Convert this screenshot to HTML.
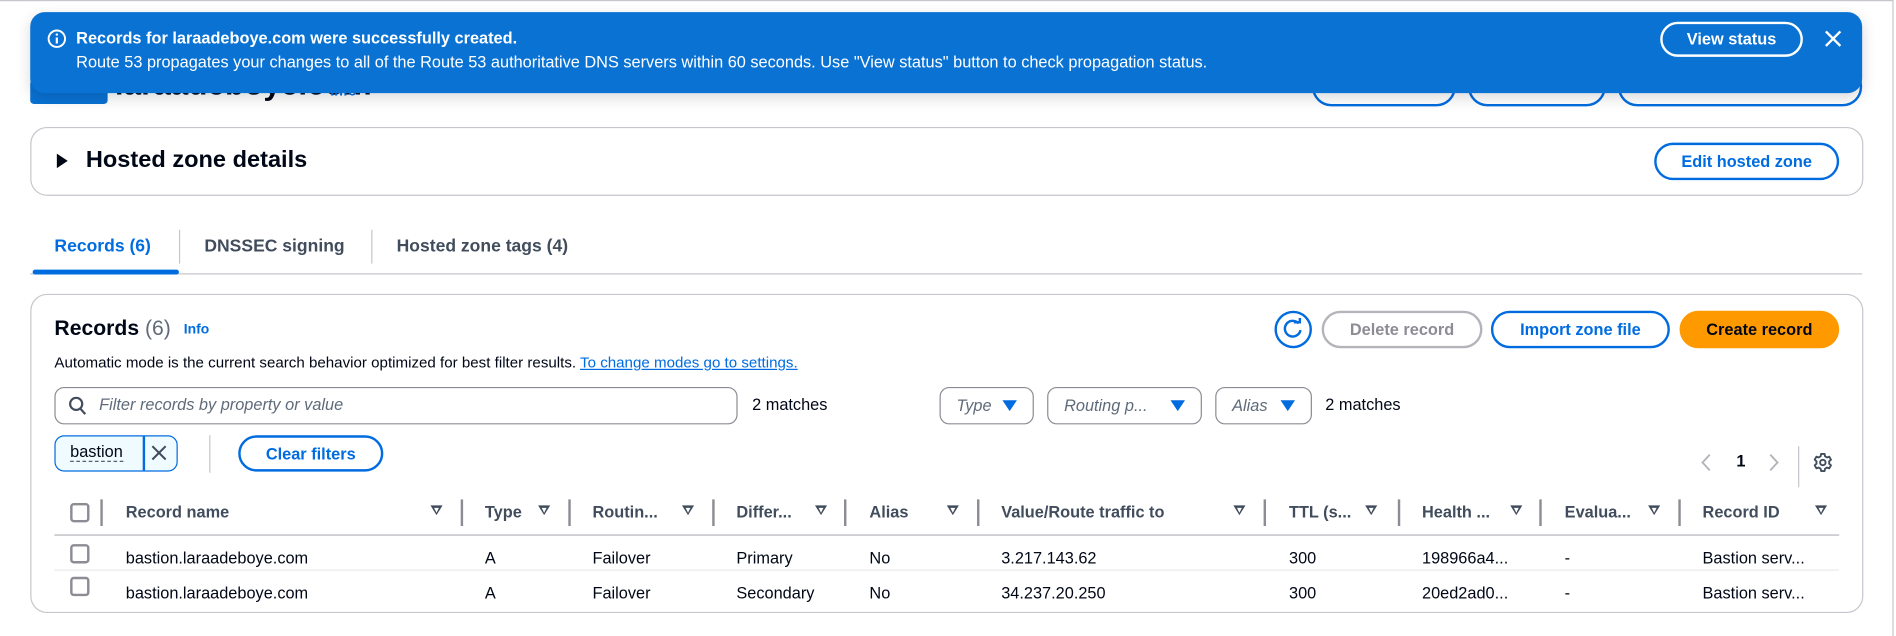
<!DOCTYPE html>
<html><head><meta charset="utf-8">
<style>
html,body{margin:0;padding:0;width:1896px;height:635px;overflow:hidden;background:#fff;}
#w{position:absolute;left:0;top:0;width:1568px;height:526px;transform:scale(1.20918);transform-origin:0 0;font-family:"Liberation Sans",sans-serif;color:#000716;font-size:13.5px;}
.a{position:absolute;white-space:nowrap;}
.box{position:absolute;border:1px solid #c6c6cd;border-radius:14px;background:#fff;}
.btn{position:absolute;box-sizing:border-box;border:2px solid #006ce0;border-radius:16px;color:#006ce0;font-weight:bold;font-size:13.5px;display:flex;align-items:center;justify-content:center;background:#fff;}
.sel{position:absolute;box-sizing:border-box;border:1.5px solid #8c8c94;border-radius:8px;top:320px;height:31px;font-style:italic;color:#5f6b7a;font-size:13.5px;display:flex;align-items:center;padding-left:13px;}
.tri{position:absolute;right:13px;top:10px;width:0;height:0;border-left:6px solid transparent;border-right:6px solid transparent;border-top:9px solid #006ce0;}
.hd{position:absolute;top:416px;font-weight:bold;color:#414d5c;font-size:13.5px;white-space:nowrap;}
.srt{position:absolute;top:418px;width:0;height:0;border-left:5px solid transparent;border-right:5px solid transparent;border-top:8px solid #414d5c;}
.srt:after{content:"";position:absolute;left:-2.5px;top:-6.5px;border-left:2.5px solid transparent;border-right:2.5px solid transparent;border-top:4px solid #fff;}
.sep{position:absolute;top:413px;width:1.5px;height:22px;background:#8c8c94;}
.cb{position:absolute;left:58px;width:12px;height:12px;border:2px solid #8c8c94;border-radius:3px;}
.td{position:absolute;white-space:nowrap;font-size:13.5px;}
</style></head><body><div id="w">
<div class="a" style="left:0;top:0;width:1566px;height:1px;background:#c6c6cd"></div>
<div class="a" style="left:1565px;top:0;width:1px;height:526px;background:#c6c6cd"></div>

<!-- header behind banner -->
<div class="a" style="left:25px;top:66px;width:64px;height:20px;background:#0972d3;border-radius:3px"></div>
<div class="a" style="left:95px;top:54px;font-size:26px;font-weight:bold">laraadeboye.com</div>
<div class="a" style="left:273px;top:68px;font-size:12px;font-weight:bold;color:#006ce0">Info</div>
<div class="btn" style="left:1085px;top:55px;width:119px;height:33px"></div>
<div class="btn" style="left:1214px;top:55px;width:114px;height:33px"></div>
<div class="btn" style="left:1338px;top:55px;width:202px;height:33px"></div>

<!-- banner -->
<div class="a" style="left:25px;top:10px;width:1515px;height:67px;background:#0972d3;border-radius:12px;box-shadow:0 4px 12px rgba(0,7,22,.15)"></div>
<svg class="a" style="left:39px;top:24px" width="16" height="16" viewBox="0 0 16 16"><circle cx="8" cy="8" r="6.8" fill="none" stroke="#fff" stroke-width="1.6"/><line x1="8" y1="7" x2="8" y2="12" stroke="#fff" stroke-width="1.8"/><circle cx="8" cy="4.6" r="1" fill="#fff"/></svg>
<div class="a" style="left:63px;top:24px;color:#fff;font-weight:bold;font-size:13.5px">Records for laraadeboye.com were successfully created.</div>
<div class="a" style="left:63px;top:44px;color:#fff;font-size:13.5px">Route 53 propagates your changes to all of the Route 53 authoritative DNS servers within 60 seconds. Use "View status" button to check propagation status.</div>
<div class="btn" style="left:1373px;top:18px;width:118px;height:29px;border-color:#fff;color:#fff;background:transparent">View status</div>
<svg class="a" style="left:1509px;top:25px" width="14" height="14" viewBox="0 0 14 14"><path d="M1 1L13 13M13 1L1 13" stroke="#fff" stroke-width="2"/></svg>

<!-- hosted zone details -->
<div class="box" style="left:25px;top:105px;width:1514px;height:55px"></div>
<div class="a" style="left:47px;top:127px;width:0;height:0;border-top:6px solid transparent;border-bottom:6px solid transparent;border-left:9px solid #000716"></div>
<div class="a" style="left:71px;top:121px;font-size:19.5px;font-weight:bold">Hosted zone details</div>
<div class="btn" style="left:1368px;top:118px;width:153px;height:31px">Edit hosted zone</div>

<!-- tabs -->
<div class="a" style="left:45px;top:196px;font-weight:bold;color:#006ce0;font-size:14.5px">Records (6)</div>
<div class="a" style="left:148px;top:190px;width:1px;height:28px;background:#c6c6cd"></div>
<div class="a" style="left:169px;top:196px;font-weight:bold;color:#414d5c;font-size:14.5px">DNSSEC signing</div>
<div class="a" style="left:307px;top:190px;width:1px;height:28px;background:#c6c6cd"></div>
<div class="a" style="left:328px;top:196px;font-weight:bold;color:#414d5c;font-size:14.5px">Hosted zone tags (4)</div>
<div class="a" style="left:25px;top:226px;width:1515px;height:1px;background:#c6c6cd"></div>
<div class="a" style="left:27px;top:223px;width:121px;height:4px;background:#006ce0;border-radius:2px"></div>

<!-- records container -->
<div class="box" style="left:25px;top:243px;width:1514px;height:262px"></div>
<div class="a" style="left:45px;top:261px;font-size:17.5px;font-weight:bold">Records <span style="font-weight:normal;color:#5f6b7a">(6)</span></div>
<div class="a" style="left:152px;top:267px;font-size:11.5px;font-weight:bold;color:#006ce0">Info</div>
<div class="a" style="left:1054px;top:257px;width:27px;height:27px;border:2px solid #006ce0;border-radius:50%"></div>
<svg class="a" style="left:1060px;top:263px" width="19" height="19" viewBox="0 0 19 19"><path d="M14 4.5A6.5 6.5 0 1 0 15.5 10" fill="none" stroke="#006ce0" stroke-width="2"/><path d="M10 3.5H15V-1" fill="none" stroke="#006ce0" stroke-width="2"/></svg>
<div class="btn" style="left:1093px;top:257px;width:133px;height:31px;border-color:#b4b4bb;color:#8c8c94">Delete record</div>
<div class="btn" style="left:1233px;top:257px;width:148px;height:31px">Import zone file</div>
<div class="btn" style="left:1389px;top:257px;width:132px;height:31px;border-color:#ff9900;background:#ff9900;color:#000716">Create record</div>
<div class="a" style="left:45px;top:293px;font-size:12.5px">Automatic mode is the current search behavior optimized for best filter results. <span style="color:#006ce0;text-decoration:underline">To change modes go to settings.</span></div>

<div class="a" style="left:45px;top:320px;width:563px;height:29px;border:1.5px solid #8c8c94;border-radius:8px"></div>
<svg class="a" style="left:57px;top:328px" width="15" height="16" viewBox="0 0 15 16"><circle cx="6" cy="6" r="5" fill="none" stroke="#414d5c" stroke-width="1.8"/><path d="M9.5 10L13.5 14.5" stroke="#414d5c" stroke-width="1.8"/></svg>
<div class="a" style="left:82px;top:327px;font-style:italic;color:#5f6b7a">Filter records by property or value</div>
<div class="a" style="left:622px;top:327px">2 matches</div>
<div class="sel" style="left:777px;width:78px">Type<span class="tri"></span></div>
<div class="sel" style="left:866px;width:128px">Routing p...<span class="tri"></span></div>
<div class="sel" style="left:1005px;width:80px">Alias<span class="tri"></span></div>
<div class="a" style="left:1096px;top:327px">2 matches</div>

<div class="a" style="left:45px;top:360px;width:100px;height:28px;border:1.5px solid #006ce0;border-radius:8px;background:#f0fbff"></div>
<div class="a" style="left:118px;top:361px;width:1.5px;height:28px;background:#006ce0"></div>
<div class="a" style="left:58px;top:366px;border-bottom:1px dashed #414d5c;line-height:15px">bastion</div>
<svg class="a" style="left:125px;top:368px" width="13" height="13" viewBox="0 0 13 13"><path d="M1 1L12 12M12 1L1 12" stroke="#414d5c" stroke-width="1.7"/></svg>
<div class="a" style="left:173px;top:360px;width:1px;height:31px;background:#c6c6cd"></div>
<div class="btn" style="left:197px;top:360px;width:120px;height:30px">Clear filters</div>

<svg class="a" style="left:1406px;top:375px" width="10" height="15" viewBox="0 0 10 15"><path d="M8 1L2 7.5L8 14" fill="none" stroke="#b4b4bb" stroke-width="1.6"/></svg>
<div class="a" style="left:1436px;top:374px;font-weight:bold">1</div>
<svg class="a" style="left:1462px;top:375px" width="10" height="15" viewBox="0 0 10 15"><path d="M2 1L8 7.5L2 14" fill="none" stroke="#b4b4bb" stroke-width="1.6"/></svg>
<div class="a" style="left:1487px;top:369px;width:1px;height:34px;background:#c6c6cd"></div>
<svg class="a" style="left:1499px;top:374px" width="17" height="17" viewBox="0 0 24 24"><path d="M10 2h4l.6 2.8 2.2 1.3 2.7-.9 2 3.5-2.1 1.9v2.8l2.1 1.9-2 3.5-2.7-.9-2.2 1.3L14 22h-4l-.6-2.8-2.2-1.3-2.7.9-2-3.5 2.1-1.9v-2.8L2.5 8.7l2-3.5 2.7.9 2.2-1.3z" fill="none" stroke="#414d5c" stroke-width="2.2" stroke-linejoin="round"/><circle cx="12" cy="12" r="3.2" fill="none" stroke="#414d5c" stroke-width="2.2"/></svg>

<!-- table header -->
<div class="cb" style="top:416px"></div>
<div class="sep" style="left:83px"></div>
<div class="hd" style="left:104px">Record name</div><div class="srt" style="left:356px"></div><div class="sep" style="left:381px"></div>
<div class="hd" style="left:401px">Type</div><div class="srt" style="left:445px"></div><div class="sep" style="left:470px"></div>
<div class="hd" style="left:490px">Routin...</div><div class="srt" style="left:564px"></div><div class="sep" style="left:589px"></div>
<div class="hd" style="left:609px">Differ...</div><div class="srt" style="left:674px"></div><div class="sep" style="left:698px"></div>
<div class="hd" style="left:719px">Alias</div><div class="srt" style="left:783px"></div><div class="sep" style="left:808px"></div>
<div class="hd" style="left:828px">Value/Route traffic to</div><div class="srt" style="left:1020px"></div><div class="sep" style="left:1045px"></div>
<div class="hd" style="left:1066px">TTL (s...</div><div class="srt" style="left:1129px"></div><div class="sep" style="left:1156px"></div>
<div class="hd" style="left:1176px">Health ...</div><div class="srt" style="left:1249px"></div><div class="sep" style="left:1273px"></div>
<div class="hd" style="left:1294px">Evalua...</div><div class="srt" style="left:1363px"></div><div class="sep" style="left:1388px"></div>
<div class="hd" style="left:1408px">Record ID</div><div class="srt" style="left:1501px"></div>
<div class="a" style="left:45px;top:442px;width:1476px;height:1px;background:#b4b4bb"></div>

<!-- rows -->
<div class="cb" style="top:450px"></div>
<div class="td" style="left:104px;top:454px">bastion.laraadeboye.com</div>
<div class="td" style="left:401px;top:454px">A</div>
<div class="td" style="left:490px;top:454px">Failover</div>
<div class="td" style="left:609px;top:454px">Primary</div>
<div class="td" style="left:719px;top:454px">No</div>
<div class="td" style="left:828px;top:454px">3.217.143.62</div>
<div class="td" style="left:1066px;top:454px">300</div>
<div class="td" style="left:1176px;top:454px">198966a4...</div>
<div class="td" style="left:1294px;top:454px">-</div>
<div class="td" style="left:1408px;top:454px">Bastion serv...</div>
<div class="a" style="left:45px;top:471px;width:1476px;height:1px;background:#e9ebed"></div>
<div class="cb" style="top:477px"></div>
<div class="td" style="left:104px;top:483px">bastion.laraadeboye.com</div>
<div class="td" style="left:401px;top:483px">A</div>
<div class="td" style="left:490px;top:483px">Failover</div>
<div class="td" style="left:609px;top:483px">Secondary</div>
<div class="td" style="left:719px;top:483px">No</div>
<div class="td" style="left:828px;top:483px">34.237.20.250</div>
<div class="td" style="left:1066px;top:483px">300</div>
<div class="td" style="left:1176px;top:483px">20ed2ad0...</div>
<div class="td" style="left:1294px;top:483px">-</div>
<div class="td" style="left:1408px;top:483px">Bastion serv...</div>
</div></body></html>
